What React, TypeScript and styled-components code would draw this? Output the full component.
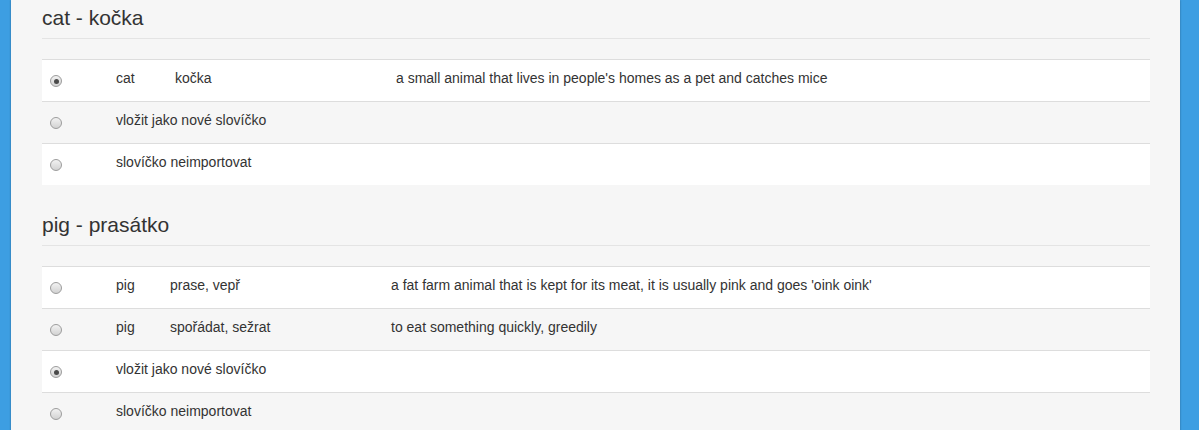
import React from "react";
import styled, { createGlobalStyle } from "styled-components";

type Entry = {
  word?: string;
  translation?: string;
  definition?: string;
  label?: string;
  checked?: boolean;
};

type Group = {
  title: string;
  columns: string;
  rows: Entry[];
};

const groups: Group[] = [
  {
    title: "cat - kočka",
    columns: "66px 59px 221px 1fr",
    rows: [
      {
        word: "cat",
        translation: "kočka",
        definition:
          "a small animal that lives in people's homes as a pet and catches mice",
        checked: true,
      },
      { label: "vložit jako nové slovíčko" },
      { label: "slovíčko neimportovat" },
    ],
  },
  {
    title: "pig - prasátko",
    columns: "66px 54px 221px 1fr",
    rows: [
      {
        word: "pig",
        translation: "prase, vepř",
        definition:
          "a fat farm animal that is kept for its meat, it is usually pink and goes 'oink oink'",
      },
      {
        word: "pig",
        translation: "spořádat, sežrat",
        definition: "to eat something quickly, greedily",
      },
      { label: "vložit jako nové slovíčko", checked: true },
      { label: "slovíčko neimportovat" },
    ],
  },
];

const App = () => {
  return (
    <>
      <GlobalStyle />
      <Page>
        <Panel>
          {groups.map((group) => (
            <Section key={group.title}>
              <SectionTitle>{group.title}</SectionTitle>
              <ChoiceTable>
                {group.rows.map((row, i) => (
                  <ChoiceRow key={i} $columns={group.columns} $striped={i % 2 === 0}>
                    <RadioCell>
                      <Radio $checked={!!row.checked} />
                    </RadioCell>
                    {row.label ? (
                      <Cell $wide>{row.label}</Cell>
                    ) : (
                      <>
                        <Cell>{row.word}</Cell>
                        <Cell>{row.translation}</Cell>
                        <Cell>{row.definition}</Cell>
                      </>
                    )}
                  </ChoiceRow>
                ))}
              </ChoiceTable>
            </Section>
          ))}
        </Panel>
      </Page>
    </>
  );
};

const GlobalStyle = createGlobalStyle`
  html, body {
    margin: 0;
    padding: 0;
    height: 100%;
    overflow: hidden;
  }
  body {
    background-color: #3d9ee2;
    font-family: "Liberation Sans", Arial, sans-serif;
    font-size: 14px;
    line-height: 20px;
    color: #333;
  }
`;

const Page = styled.div`
  min-height: 100vh;
  padding-left: 11px;
  width: 1169px;
`;

const Panel = styled.main`
  min-height: 100vh;
  background-color: #f6f6f6;
  box-shadow: 0 0 2px rgba(0, 0, 0, 0.35);
  padding: 6px 30px 0 31px;
  display: flex;
  flex-direction: column;
  gap: 28px;
`;

const Section = styled.section`
  display: flex;
  flex-direction: column;
`;

const SectionTitle = styled.h3`
  margin: 0 0 20px;
  padding-bottom: 9px;
  border-bottom: 1px solid #e4e4e4;
  font-size: 21px;
  line-height: 23px;
  font-weight: 500;
  color: #333;
`;

const ChoiceTable = styled.div`
  display: flex;
  flex-direction: column;
`;

const ChoiceRow = styled.div<{ $columns: string; $striped: boolean }>`
  display: grid;
  grid-template-columns: ${(p) => p.$columns};
  height: 42px;
  box-sizing: border-box;
  border-top: 1px solid #dddddd;
  background-color: ${(p) => (p.$striped ? "#ffffff" : "transparent")};
`;

const RadioCell = styled.div`
  padding: 15px 8px 0;
`;

const Radio = styled.span<{ $checked: boolean }>`
  display: block;
  width: 12px;
  height: 12px;
  border-radius: 50%;
  border: 1px solid #9c9c9c;
  box-sizing: border-box;
  background: linear-gradient(#f2f2f2, #d2d2d2);
  position: relative;
  &::after {
    content: "";
    display: ${(p) => (p.$checked ? "block" : "none")};
    position: absolute;
    left: 2.5px;
    top: 2.5px;
    width: 5px;
    height: 5px;
    border-radius: 50%;
    background: #4a4a4a;
  }
`;

const Cell = styled.div<{ $wide?: boolean }>`
  padding: 8px 8px 0;
  white-space: nowrap;
  grid-column: ${(p) => (p.$wide ? "2 / -1" : "auto")};
`;

export default App;
